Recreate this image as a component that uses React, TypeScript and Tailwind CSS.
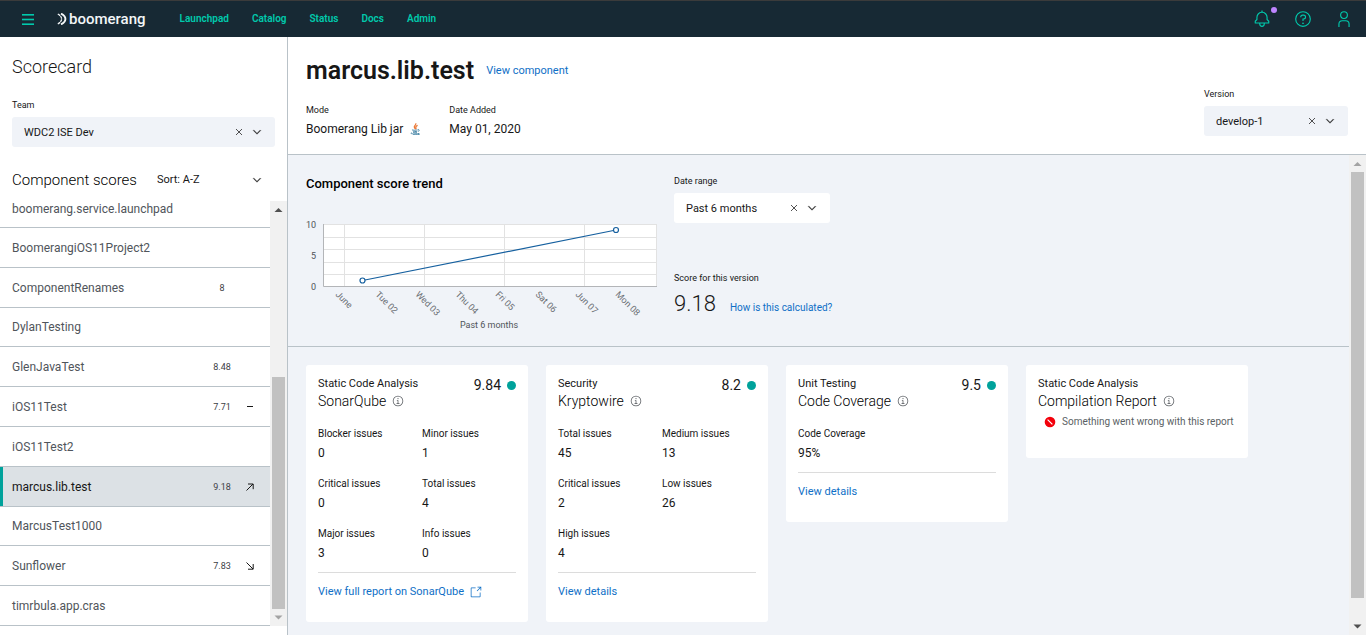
import React, { ReactNode } from "react";

const NAV_LINKS = ["Launchpad", "Catalog", "Status", "Docs", "Admin"];

type Trend = "up" | "down" | "flat";
type Component = { name: string; score?: string; trend?: Trend };

const COMPONENTS: Component[] = [
  { name: "BoomerangiOS11Project2" },
  { name: "ComponentRenames", score: "8" },
  { name: "DylanTesting" },
  { name: "GlenJavaTest", score: "8.48" },
  { name: "iOS11Test", score: "7.71", trend: "flat" },
  { name: "iOS11Test2" },
  { name: "marcus.lib.test", score: "9.18", trend: "up" },
  { name: "MarcusTest1000" },
  { name: "Sunflower", score: "7.83", trend: "down" },
  { name: "timrbula.app.cras" },
];
const SELECTED = "marcus.lib.test";

type Metric = { label: string; value: string };
type Report = {
  category: string;
  name: string;
  score?: string;
  metrics?: Metric[];
  link?: string;
  external?: boolean;
  error?: string;
};

const REPORTS: Report[] = [
  {
    category: "Static Code Analysis",
    name: "SonarQube",
    score: "9.84",
    metrics: [
      { label: "Blocker issues", value: "0" },
      { label: "Minor issues", value: "1" },
      { label: "Critical issues", value: "0" },
      { label: "Total issues", value: "4" },
      { label: "Major issues", value: "3" },
      { label: "Info issues", value: "0" },
    ],
    link: "View full report on SonarQube",
    external: true,
  },
  {
    category: "Security",
    name: "Kryptowire",
    score: "8.2",
    metrics: [
      { label: "Total issues", value: "45" },
      { label: "Medium issues", value: "13" },
      { label: "Critical issues", value: "2" },
      { label: "Low issues", value: "26" },
      { label: "High issues", value: "4" },
    ],
    link: "View details",
  },
  {
    category: "Unit Testing",
    name: "Code Coverage",
    score: "9.5",
    metrics: [{ label: "Code Coverage", value: "95%" }],
    link: "View details",
  },
  {
    category: "Static Code Analysis",
    name: "Compilation Report",
    error: "Something went wrong with this report",
  },
];

function MenuIcon() {
  return (
    <svg viewBox="0 0 12 11" className="h-[11px] w-3" fill="currentColor" aria-hidden="true">
      <rect width="12" height="1.6" />
      <rect y="4.7" width="12" height="1.6" />
      <rect y="9.4" width="12" height="1.6" />
    </svg>
  );
}

function BoomerangMark() {
  return (
    <svg viewBox="0 0 10 12" className="h-3 w-2.5" fill="none" stroke="currentColor" aria-hidden="true">
      <path d="M0.800 1C3 2.200 4.600 4 4.600 6S3 9.800 0.800 11" strokeWidth="1.300" strokeDasharray="2.800 0.600" />
      <path d="M4 0.600C6.800 2 8.400 4 8.400 6S6.800 10 4 11.400" strokeWidth="1.900" />
    </svg>
  );
}

function BellIcon() {
  return (
    <svg viewBox="0 0 32 32" className="size-[18px]" fill="currentColor" aria-hidden="true">
      <path d="M28.71,19.29,26,16.59V13a10,10,0,0,0-9-9.95V1H15V3.05A10,10,0,0,0,6,13v3.59l-2.71,2.7A1,1,0,0,0,3,20v3a1,1,0,0,0,1,1h7v1a5,5,0,0,0,10,0V24h7a1,1,0,0,0,1-1V20A1,1,0,0,0,28.71,19.29ZM19,25a3,3,0,0,1-6,0V24h6Zm8-3H5V20.41l2.71-2.7A1,1,0,0,0,8,17V13a8,8,0,0,1,16,0v4a1,1,0,0,0,.29.71L27,20.41Z" />
    </svg>
  );
}

function HelpIcon() {
  return (
    <svg viewBox="0 0 32 32" className="size-[18px]" fill="currentColor" aria-hidden="true">
      <path d="M16,2A14,14,0,1,0,30,16,14,14,0,0,0,16,2Zm0,26A12,12,0,1,1,28,16,12,12,0,0,1,16,28Z" />
      <circle cx="16" cy="23.5" r="1.5" />
      <path d="M17,8H15.5A4.49,4.49,0,0,0,11,12.5V13h2v-.5A2.5,2.5,0,0,1,15.5,10H17a2.5,2.5,0,0,1,0,5H15v4.5h2V17a4.5,4.5,0,0,0,0-9Z" />
    </svg>
  );
}

function UserIcon() {
  return (
    <svg viewBox="0 0 32 32" className="size-[18px]" fill="currentColor" aria-hidden="true">
      <path d="M16,4a5,5,0,1,1-5,5,5,5,0,0,1,5-5m0-2a7,7,0,1,0,7,7A7,7,0,0,0,16,2Z" />
      <path d="M26,30H24V25a5,5,0,0,0-5-5H13a5,5,0,0,0-5,5v5H6V25a7,7,0,0,1,7-7h6a7,7,0,0,1,7,7Z" />
    </svg>
  );
}

function CloseIcon() {
  return (
    <svg viewBox="0 0 12 12" className="size-3" stroke="currentColor" strokeWidth="0.9" aria-hidden="true">
      <path d="M3 3l6 6M9 3l-6 6" />
    </svg>
  );
}

function ChevronIcon() {
  return (
    <svg viewBox="0 0 16 16" className="size-3" fill="currentColor" aria-hidden="true">
      <path d="M8 11L3 6 3.7 5.3 8 9.6 12.3 5.3 13 6z" stroke="currentColor" strokeWidth="0.5" />
    </svg>
  );
}

function InfoIcon() {
  return (
    <svg viewBox="0 0 32 32" className="size-3 text-[#55595e]" fill="currentColor" aria-hidden="true">
      <path d="M17,22V14H13v2h2v6H12v2h8V22Z" />
      <path d="M16,8a1.5,1.5,0,1,0,1.5,1.5A1.5,1.5,0,0,0,16,8Z" />
      <path d="M16,30A14,14,0,1,1,30,16,14,14,0,0,1,16,30ZM16,4A12,12,0,1,0,28,16,12,12,0,0,0,16,4Z" />
    </svg>
  );
}

function LaunchIcon() {
  return (
    <svg viewBox="0 0 32 32" className="size-3" fill="currentColor" aria-hidden="true">
      <path d="M26,30H4a2,2,0,0,1-2-2V6A2,2,0,0,1,4,4H15V6H4V28H26V17H28V28A2,2,0,0,1,26,30Z" />
      <path d="M20 2V4H26.600L18 12.600 19.400 14 28 5.400V12H30V2z" />
    </svg>
  );
}

function JavaIcon() {
  return (
    <svg viewBox="0 0 12 12" className="size-3" fill="none" aria-hidden="true">
      <path d="M6.800 .3C7.500 2 4.400 3 5.400 4.600L6 5.800M8.600 2.400C6.800 3.100 6.400 4 7 4.900 7.300 5.400 7 5.800 6.500 6.300" stroke="#ea7430" strokeWidth="1.200" />
      <path d="M3.200 6.600C2.200 7.300 7 7.400 8.600 6.800M9 6.600C10.800 6.300 10.500 8 9 8.400M3.800 8C4 8.700 7 8.700 8.300 8.200M4.200 9.400C5 10 7 9.900 8 9.500M2.500 9.700C0 10.500 5 11.600 10 10.400M4 11.700C7 12 10.500 11.600 11 10.800" stroke="#4f8cab" strokeWidth="1" />
    </svg>
  );
}

function ErrorIcon() {
  return (
    <svg viewBox="0 0 12 12" className="size-3" aria-hidden="true">
      <circle cx="6" cy="6" r="5.300" fill="#f3000b" />
      <path d="M3.600 3.600l4.800 4.800" stroke="#fff" strokeWidth="1.200" />
    </svg>
  );
}

function TrendIcon({ trend }: { trend?: Trend }) {
  if (!trend) return null;
  const paths: Record<Trend, string> = {
    up: "M1.500 8.500L8 2M3 2H8.200V7.200",
    down: "M1.500 1.500L8 8M8.200 3V8.200H3",
    flat: "M2 4.500h6",
  };
  return (
    <svg viewBox="0 0 10 10" className="size-2.5 text-[#171717]" fill="none" stroke="currentColor" strokeWidth="1" aria-hidden="true">
      <path d={paths[trend]} />
    </svg>
  );
}

function ScrollArrow({ down, active }: { down?: boolean; active?: boolean }) {
  return (
    <svg
      viewBox="0 0 17 17"
      className={active ? "size-[17px] shrink-0 text-[#505050]" : "size-[17px] shrink-0 text-[#a3a3a3]"}
      fill="currentColor"
      aria-hidden="true"
    >
      <path d={down ? "M4.500 6.500h8L8.500 10.500z" : "M4.500 11h8L8.500 7z"} />
    </svg>
  );
}

function Dropdown({ id, label, value, tone }: { id: string; label: string; value: string; tone: string }) {
  return (
    <div className="flex flex-col">
      <label htmlFor={id} className="text-[9px] leading-4 text-[#171717]">
        {label}
      </label>
      <div className={`relative mt-1 h-[30px] rounded-[3px] ${tone}`}>
        <select id={id} className="h-full w-full appearance-none bg-transparent pl-3 pr-12 pt-0.5 text-[11px] text-[#171717]">
          <option>{value}</option>
        </select>
        <button type="button" aria-label={`Clear ${label}`} className="absolute right-[30px] top-[9px] text-[#3d3d3d]">
          <CloseIcon />
        </button>
        <span className="pointer-events-none absolute right-3 top-[9px] text-[#2a2a2a]">
          <ChevronIcon />
        </span>
      </div>
    </div>
  );
}

function Header() {
  return (
    <header className="flex h-[37px] shrink-0 items-center border-t border-[#3b3b3b] bg-[#172934] text-[#00c9ac]">
      <button type="button" aria-label="Menu" className="ml-[22px]">
        <MenuIcon />
      </button>
      <a href="#home" className="ml-[23px] flex items-center text-[15px] font-medium text-[#f3f6f8]">
        <BoomerangMark />
        <span className="ml-0.5 leading-5">boomerang</span>
      </a>
      <nav className="ml-[34px] flex gap-[23px]">
        {NAV_LINKS.map((link) => (
          <a key={link} href={`#${link.toLowerCase()}`} className="text-[10px] font-semibold leading-4">
            {link}
          </a>
        ))}
      </nav>
      <div className="ml-auto flex items-center gap-[23px] pr-[13px]">
        <button type="button" aria-label="Notifications" className="relative">
          <BellIcon />
          <span className="absolute -right-1.5 -top-[3px] size-1.5 rounded-full bg-[#be85ff]" />
        </button>
        <button type="button" aria-label="Help">
          <HelpIcon />
        </button>
        <button type="button" aria-label="Profile">
          <UserIcon />
        </button>
      </div>
    </header>
  );
}

function ComponentRow({ item }: { item: Component }) {
  const selected = item.name === SELECTED;
  return (
    <li className={`flex flex-1 border-b border-[#b9c2c8] ${selected ? "bg-[#dce1e5]" : ""}`}>
      <a
        href={`#${item.name}`}
        aria-current={selected ? "page" : undefined}
        className={`flex flex-1 items-center border-l-[3px] pl-[9px] pt-px text-xs ${
          selected ? "border-[#00a29b] text-[#171717]" : "border-transparent text-[#50555b]"
        }`}
      >
        <span className="flex-1">{item.name}</span>
        <span className="w-8 text-center text-[9px] text-[#3c4045]">{item.score}</span>
        <span className="mr-2 flex w-6 justify-center">
          <TrendIcon trend={item.trend} />
        </span>
      </a>
    </li>
  );
}

function Sidebar() {
  return (
    <aside className="flex w-72 shrink-0 flex-col border-r border-[#b9c2c8] bg-white pb-[9px]">
      <div className="px-3">
        <h1 className="pt-[18px] text-lg font-light leading-6 text-[#171717]">Scorecard</h1>
        <div className="mt-[18px]">
          <Dropdown id="team" label="Team" value="WDC2 ISE Dev" tone="bg-[#f0f3f8]" />
        </div>
      </div>
      <div className="mt-[23px] flex items-center pl-3 pr-6">
        <h2 className="text-[15px] font-light leading-5 text-[#000]">Component scores</h2>
        <div className="relative ml-5 flex flex-1 items-center">
          <select aria-label="Sort" className="w-full appearance-none bg-transparent text-[11px] leading-5 text-[#171717]">
            <option>Sort: A-Z</option>
          </select>
          <span className="pointer-events-none absolute right-0 text-[#2a2a2a]">
            <ChevronIcon />
          </span>
        </div>
      </div>
      <div className="mt-[11px] flex min-h-0 flex-1">
        <ul className="flex flex-1 flex-col">
          <li className="h-[27px] shrink-0 border-b border-[#b9c2c8]">
            <a href="#boomerang.service.launchpad" className="block pl-3 text-xs leading-4 text-[#50555b]">
              boomerang.service.launchpad
            </a>
          </li>
          {COMPONENTS.map((item) => (
            <ComponentRow key={item.name} item={item} />
          ))}
        </ul>
        <div className="flex w-[17px] flex-col items-center bg-[#f1f1f1]">
          <ScrollArrow active />
          <div className="grow-[159]" />
          <div className="w-[13px] grow-[232] bg-[#c1c1c1]" />
          <ScrollArrow down />
        </div>
      </div>
    </aside>
  );
}

function Fact({ label, children }: { label: string; children: ReactNode }) {
  return (
    <div>
      <dt className="text-[9px] leading-[18px] text-[#171717]">{label}</dt>
      <dd className="flex items-center gap-1.5 text-xs leading-5 text-[#171717]">{children}</dd>
    </div>
  );
}

function ComponentHeader() {
  return (
    <section className="flex h-[118px] shrink-0 items-end justify-between border-b border-[#b9c2c8] bg-white px-[18px]">
      <div className="pb-[15px]">
        <div className="flex items-center gap-3">
          <h2 className="text-[25px] font-semibold leading-8 text-[#171717]">marcus.lib.test</h2>
          <a href="#component" className="text-[11px] leading-4 text-[#0f6fc6]">
            View component
          </a>
        </div>
        <dl className="mt-3.5 flex gap-7">
          <Fact label="Mode">
            Boomerang Lib jar <JavaIcon />
          </Fact>
          <Fact label="Date Added">May 01, 2020</Fact>
        </dl>
      </div>
      <div className="w-36 pb-[18px]">
        <Dropdown id="version" label="Version" value="develop-1" tone="bg-[#f0f3f8]" />
      </div>
    </section>
  );
}

const TICKS = ["June", "Tue 02", "Wed 03", "Thu 04", "Fri 05", "Sat 06", "Jun 07", "Mon 08"];

function TrendChart() {
  return (
    <svg viewBox="0 0 352 120" className="h-[120px] w-[352px]" role="img" aria-label="Component score trend">
      <rect x="18" y="9" width="333" height="63" fill="#fff" />
      <g stroke="#e2e2e2" strokeWidth="1">
        {[9.5, 22.5, 34.5, 47.5, 59.5].map((y) => (
          <path key={y} d={`M18 ${y}H351`} />
        ))}
        {[38.5, 118.5, 198.5, 278.5, 350.5].map((x) => (
          <path key={x} d={`M${x} 9V72`} />
        ))}
      </g>
      <path d="M17.500 9V71.500H351" fill="none" stroke="#b3b5b8" />
      <path d="M56.500 65.500L310 15" stroke="#16609f" strokeWidth="1.2" />
      <circle cx="56.500" cy="65.500" r="2.500" fill="#fff" stroke="#16609f" strokeWidth="1.200" />
      <circle cx="310" cy="15" r="2.500" fill="#fff" stroke="#16609f" strokeWidth="1.200" />
      <g fontSize="9" fill="#4f5358" textAnchor="end">
        <text x="10" y="13">10</text>
        <text x="10" y="44">5</text>
        <text x="10" y="75">0</text>
      </g>
      <g fontSize="9" fill="#6a6e73">
        {TICKS.map((tick, i) => (
          <text key={tick} transform={`translate(${29 + i * 40} 80) rotate(45)`}>
            {tick}
          </text>
        ))}
      </g>
      <text x="183" y="113" fontSize="9" fill="#4f5358" textAnchor="middle">
        Past 6 months
      </text>
    </svg>
  );
}

function ScoreTrend() {
  return (
    <section className="flex h-48 shrink-0 gap-4 border-b border-[#b9c2c8] px-[18px]">
      <div>
        <h3 className="pt-5 text-[13px] font-medium leading-[18px] text-[#000]">Component score trend</h3>
        <div className="mt-[22px]">
          <TrendChart />
        </div>
      </div>
      <div className="w-[156px] pt-[18px]">
        <Dropdown id="range" label="Date range" value="Past 6 months" tone="bg-white" />
        <p className="mt-[47px] text-[9px] leading-4 text-[#171717]">Score for this version</p>
        <div className="mt-1 flex items-center gap-3.5 whitespace-nowrap">
          <span className="text-[22px] font-light leading-7 text-[#171717]">9.18</span>
          <a href="#calculation" className="pt-2 text-[10px] leading-4 text-[#0f6fc6]">
            How is this calculated?
          </a>
        </div>
      </div>
    </section>
  );
}

function ReportCard({ report }: { report: Report }) {
  return (
    <article className="w-[222px] rounded-[3px] bg-white px-3 pt-3">
      <div className="flex justify-between">
        <div>
          <p className="text-[11px] leading-[14px] text-[#171717]">{report.category}</p>
          <h3 className="flex items-center gap-1.5 pb-0.5 text-sm font-light leading-5 text-[#000]">
            {report.name}
            <InfoIcon />
          </h3>
        </div>
        {report.score && (
          <div className="flex h-4 items-center gap-1.5">
            <span className="text-sm leading-4 text-[#171717]">{report.score}</span>
            <span className="size-[9px] rounded-full bg-[#00a29b]" />
          </div>
        )}
      </div>
      {report.metrics && (
        <dl className="mt-3 grid grid-cols-2 gap-x-2.5 gap-y-3">
          {report.metrics.map((metric) => (
            <div key={metric.label}>
              <dt className="text-[10px] leading-[18px] text-[#171717]">{metric.label}</dt>
              <dd className="text-xs leading-5 text-[#171717]">{metric.value}</dd>
            </div>
          ))}
        </dl>
      )}
      {report.link && (
        <div className="mt-[9px] border-t border-[#dcdcdc] pb-[22px] pt-[11px]">
          <a href="#report" className="flex items-center gap-1.5 text-[11px] leading-4 text-[#0f6fc6]">
            {report.link}
            {report.external && <LaunchIcon />}
          </a>
        </div>
      )}
      {report.error && (
        <p className="flex items-center gap-1.5 pb-[27px] pl-1.5 text-[10px] leading-[18px] text-[#5a5f64]">
          <ErrorIcon />
          {report.error}
        </p>
      )}
    </article>
  );
}

export default function App() {
  return (
    <div className="flex h-screen flex-col overflow-hidden bg-[#f0f3f8] font-['Roboto','Liberation_Sans',sans-serif]">
      <Header />
      <div className="flex min-h-0 flex-1">
        <Sidebar />
        <main className="flex min-w-0 flex-1 flex-col">
          <ComponentHeader />
          <div className="flex min-h-0 flex-1">
            <div className="flex min-w-0 flex-1 flex-col">
              <ScoreTrend />
              <div className="flex flex-wrap items-start gap-[18px] p-[18px]">
                {REPORTS.map((report) => (
                  <ReportCard key={report.name} report={report} />
                ))}
              </div>
            </div>
            <div className="flex w-[17px] flex-col items-center bg-[#f1f1f1]">
              <ScrollArrow />
              <div className="w-[13px] grow-[426] bg-[#c1c1c1]" />
              <div className="grow-[20]" />
              <ScrollArrow down active />
            </div>
          </div>
        </main>
      </div>
    </div>
  );
}
